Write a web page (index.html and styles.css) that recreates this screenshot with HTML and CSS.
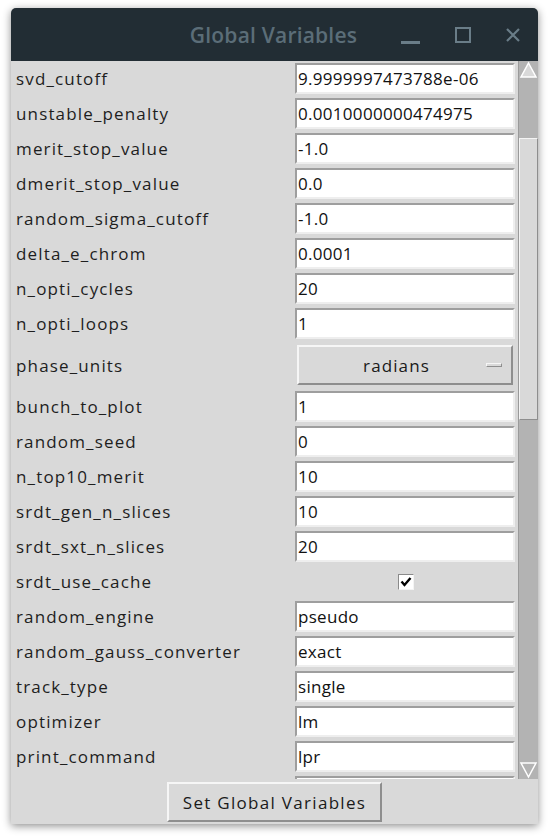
FILE: index.html
```html
<!DOCTYPE html>
<html>
<head>
<meta charset="utf-8">
<link rel="stylesheet" href="styles.css">
</head>
<body>
<div class="window">
  <div class="titlebar">
    <div class="title">Global Variables</div>
    <div class="controls">
      <span class="ctl ctl-min"></span>
      <span class="ctl ctl-max"></span>
      <svg class="ctl-close" width="16" height="16" viewBox="0 0 16 16"><path d="M2 2 L14 14 M14 2 L2 14" stroke="#6a7d88" stroke-width="2.2" fill="none"/></svg>
    </div>
  </div>
  <div class="body">
    <div class="scrollwrap">
      <div class="rows">
        <div class="row"><span class="label">svd_cutoff</span><div class="entry">9.9999997473788e-06</div></div>
        <div class="row"><span class="label">unstable_penalty</span><div class="entry">0.0010000000474975</div></div>
        <div class="row"><span class="label">merit_stop_value</span><div class="entry">-1.0</div></div>
        <div class="row"><span class="label">dmerit_stop_value</span><div class="entry">0.0</div></div>
        <div class="row"><span class="label">random_sigma_cutoff</span><div class="entry">-1.0</div></div>
        <div class="row"><span class="label">delta_e_chrom</span><div class="entry">0.0001</div></div>
        <div class="row"><span class="label">n_opti_cycles</span><div class="entry">20</div></div>
        <div class="row"><span class="label">n_opti_loops</span><div class="entry">1</div></div>
        <div class="row row-menu"><span class="label">phase_units</span><div class="menubtn"><span class="mtext">radians</span><span class="indicator"></span></div></div>
        <div class="row"><span class="label">bunch_to_plot</span><div class="entry">1</div></div>
        <div class="row"><span class="label">random_seed</span><div class="entry">0</div></div>
        <div class="row"><span class="label">n_top10_merit</span><div class="entry">10</div></div>
        <div class="row"><span class="label">srdt_gen_n_slices</span><div class="entry">10</div></div>
        <div class="row"><span class="label">srdt_sxt_n_slices</span><div class="entry">20</div></div>
        <div class="row"><span class="label">srdt_use_cache</span><div class="checkcell"><span class="checkbox"><svg width="12" height="12" viewBox="0 0 12 12"><path d="M1.5 5.5 L4.5 9 L10.5 2" stroke="#000" stroke-width="2.4" fill="none"/></svg></span></div></div>
        <div class="row"><span class="label">random_engine</span><div class="entry">pseudo</div></div>
        <div class="row"><span class="label">random_gauss_converter</span><div class="entry">exact</div></div>
        <div class="row"><span class="label">track_type</span><div class="entry">single</div></div>
        <div class="row"><span class="label">optimizer</span><div class="entry">lm</div></div>
        <div class="row"><span class="label">print_command</span><div class="entry">lpr</div></div>
        <div class="row"><span class="label">&nbsp;</span><div class="entry">&nbsp;</div></div>
      </div>
      <div class="scrollbar">
        <div class="arrow arrow-up"><svg width="19" height="18" viewBox="0 0 19 18"><path d="M9.5 2 L17 16 L2 16 Z" fill="#d9d9d9" stroke="#fff" stroke-width="1.5"/></svg></div>
        <div class="trough">
          <div class="gap-top"></div>
          <div class="slider"></div>
          <div class="gap-bottom"></div>
        </div>
        <div class="arrow arrow-down"><svg width="19" height="18" viewBox="0 0 19 18"><path d="M9.5 16 L17 2 L2 2 Z" fill="#b3b3b3" stroke="#fff" stroke-width="1.5"/></svg></div>
      </div>
    </div>
    <div class="footer">
      <button class="setbtn">Set Global Variables</button>
    </div>
  </div>
</div>
</body>
</html>
```
FILE: styles.css
```css
html, body {
  margin: 0;
  padding: 0;
  background: #ffffff;
}
body {
  width: 552px;
  height: 840px;
  overflow: hidden;
  padding-top: 8px;
  padding-left: 11px;
  box-sizing: border-box;
}
.window {
  width: 527px;
  height: 816px;
  display: flex;
  flex-direction: column;
  background: #d9d9d9;
  border-radius: 5px 5px 0 0;
  box-shadow: 0 2px 8px rgba(0,0,0,0.45);
  overflow: hidden;
}
.titlebar {
  height: 53px;
  flex: none;
  background: #222d34;
  display: flex;
  align-items: center;
  position: relative;
}
.title {
  flex: 1;
  text-align: center;
  font-family: "Open Sans", "DejaVu Sans", sans-serif;
  font-size: 21px;
  font-weight: 600;
  color: #5b6d78;
  letter-spacing: 0.2px;
  padding-right: 2px;
}
.controls {
  position: absolute;
  right: 17px;
  top: 0;
  height: 53px;
  display: flex;
  align-items: center;
  gap: 0;
}
.ctl-min {
  width: 19px;
  height: 3px;
  background: #6a7d88;
  margin-top: 16px;
  margin-right: 35px;
}
.ctl-max {
  width: 12px;
  height: 12px;
  border: 2px solid #6a7d88;
  margin-right: 34px;
}
.body {
  flex: 1;
  display: flex;
  flex-direction: column;
}
.scrollwrap {
  height: 718px;
  display: flex;
  overflow: hidden;
}
.rows {
  width: 507px;
  flex: none;
  display: flex;
  flex-direction: column;
}
.row {
  height: 35px;
  flex: none;
  display: flex;
  align-items: center;
  justify-content: space-between;
  padding-left: 5px;
  padding-right: 3px;
  box-sizing: border-box;
}
.row-menu {
  height: 48px;
}
.label {
  font-family: "Open Sans", "DejaVu Sans", sans-serif;
  font-size: 17px;
  letter-spacing: 1.15px;
  color: #1e1e1e;
}
.entry {
  width: 220px;
  height: 31px;
  box-sizing: border-box;
  background: #ffffff;
  border: 2px solid;
  border-color: #9e9e9e #eeeeee #eeeeee #9e9e9e;
  font-family: "Open Sans", "DejaVu Sans", sans-serif;
  font-size: 17px;
  letter-spacing: 0.3px;
  color: #111;
  padding-left: 1px;
  line-height: 27px;
  white-space: nowrap;
  overflow: hidden;
}
.menubtn {
  width: 216px;
  height: 40px;
  margin-right: 2px;
  box-sizing: border-box;
  border: 2px solid;
  border-color: #f6f6f6 #8e8e8e #8e8e8e #f6f6f6;
  background: #d9d9d9;
  display: flex;
  align-items: center;
  position: relative;
}
.mtext {
  flex: 1;
  text-align: center;
  font-family: "Open Sans", "DejaVu Sans", sans-serif;
  font-size: 17px;
  letter-spacing: 1.1px;
  color: #1a1a1a;
  padding-left: 8px;
}
.indicator {
  width: 16px;
  height: 4px;
  box-sizing: border-box;
  border: 1px solid;
  border-color: #f6f6f6 #8e8e8e #8e8e8e #f6f6f6;
  margin-right: 9px;
}
.checkcell {
  width: 220px;
  display: flex;
  justify-content: center;
}
.checkbox {
  width: 16px;
  height: 16px;
  box-sizing: border-box;
  background: #fff;
  border: 1px solid;
  border-color: #8a8a8a #f4f4f4 #f4f4f4 #8a8a8a;
  display: flex;
  align-items: center;
  justify-content: center;
  margin-left: 2px;
}
.scrollbar {
  width: 19px;
  flex: none;
  display: flex;
  flex-direction: column;
  background: #b3b3b3;
  border-left: 1px solid #9a9a9a;
  border-right: 1px solid #eaeaea;
  box-sizing: content-box;
}
.arrow {
  height: 18px;
  flex: none;
  display: flex;
}
.trough {
  flex: 1;
  display: flex;
  flex-direction: column;
}
.gap-top {
  height: 59px;
}
.slider {
  height: 282px;
  background: #d9d9d9;
  border: 1px solid;
  border-color: #f4f4f4 #8e8e8e #8e8e8e #f4f4f4;
  box-sizing: border-box;
}
.gap-bottom {
  flex: 1;
}
.footer {
  flex: 1;
  display: flex;
  justify-content: center;
  align-items: flex-start;
  padding-top: 3px;
}
.setbtn {
  width: 215px;
  height: 40px;
  background: #d9d9d9;
  border: 2px solid;
  border-color: #f6f6f6 #8e8e8e #8e8e8e #f6f6f6;
  font-family: "Open Sans", "DejaVu Sans", sans-serif;
  font-size: 17px;
  letter-spacing: 1.3px;
  color: #1a1a1a;
  padding: 0;
}
```
